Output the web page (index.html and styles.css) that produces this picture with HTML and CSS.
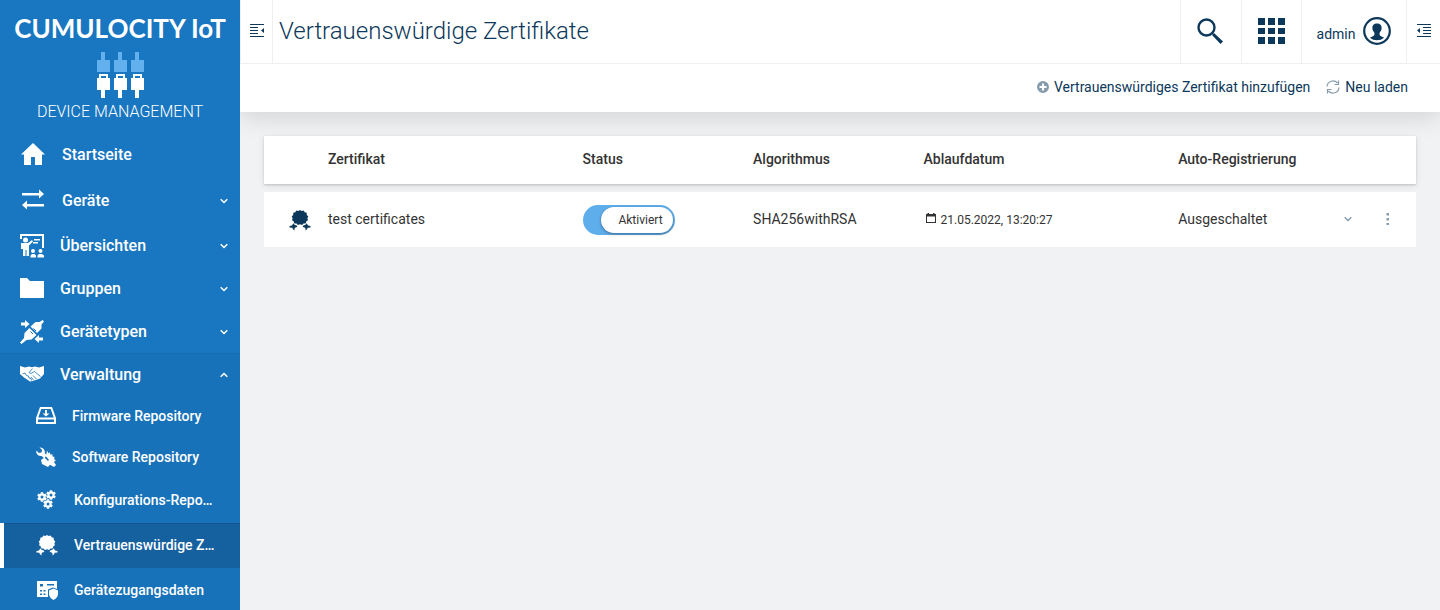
FILE: index.html
```html
<!DOCTYPE html>
<html lang="de">
<head>
<meta charset="utf-8">
<title>Vertrauenswürdige Zertifikate</title>
<link rel="stylesheet" href="styles.css">
</head>
<body>
<svg class="defs" aria-hidden="true">
  <symbol id="cert" viewBox="0 0 22 22">
    <path d="M11 1l1.700 1.100 2-.500 1 1.700 2 .500.100 2.100 1.500 1.500-.900 1.900.500 2-1.700 1.200-.600 1.900-2.100.100-1.400 1.500L11 15.300 8.900 16l-1.400-1.500-2.100-.100-.600-1.900-1.700-1.200.5-2-.9-1.900 1.500-1.500.1-2.100 2-.5 1-1.700 2 .5z"/>
    <path d="M4.300 14.200l1.200 1.500 2.200.800.700 1.500-1.700.200-1.200 1.300v2l-1.800-1.500-.200-1.200L.500 18.500V17l2.500-.500zM17.700 14.200l-1.200 1.500-2.200.800-.700 1.500 1.700.200 1.200 1.300v2l1.800-1.500.200-1.200 3-.300V17l-2.500-.500z"/>
  </symbol>
  <symbol id="down" viewBox="0 0 8 6"><path d="M.7 1.200L4 4.500l3.300-3.300" fill="none" stroke="currentColor" stroke-width="1.500"/></symbol>
  <symbol id="gear" viewBox="-5 -5 10 10">
    <circle r="2.600" fill="none" stroke="currentColor" stroke-width="2.200"/>
    <path d="M0-4.800v1.600M0 4.800V3.200M-4.200-2.400l1.400.8M4.200 2.400l-1.400-.8M-4.200 2.400l1.400-.8M4.200-2.400l-1.400.8" stroke="currentColor" stroke-width="2.400"/>
  </symbol>
</svg>
<div class="shell">
  <aside class="side">
    <div class="brand">
      <div class="brand-name">CUMULOCITY IoT</div>
      <svg class="brand-logo" viewBox="0 0 47 46">
        <path fill="#62b0ee" d="M4 0h4v8h5v12H0V8h4zM21 0h4v8h5v12H17V8h4zM38 0h4v8h5v12H34V8h4z"/>
        <path fill="#fff" fill-rule="evenodd" d="M2 22h9v4h2v12H8v8H4v-8H0V26h2zm2 2v2h5v-2zM19 22h9v4h2v12h-5v8h-4v-8h-4V26h2zm2 2v2h5v-2zM36 22h9v4h2v12h-5v8h-4v-8h-4V26h2zm2 2v2h5v-2z"/>
      </svg>
      <div class="brand-app">DEVICE MANAGEMENT</div>
    </div>
    <nav class="nav">
      <a class="item large" href="#">
        <svg viewBox="0 0 26 26"><path d="M13 1L1 12.500h3V23h7v-8h4v8h7V12.500h3z"/></svg><span class="label">Startseite</span>
      </a>
      <a class="item large" href="#">
        <svg viewBox="0 0 26 26"><path d="M2 5h17V1.500L24 6l-5 4.500V7.500H2zM24 16H7v-3.500L2 17l5 4.500v-3h17z"/></svg><span class="label">Geräte</span><svg class="chev"><use href="#down"/></svg>
      </a>
      <a class="item" href="#">
        <svg viewBox="0 0 24 24"><path d="M0 0h24v14h-2V2H2v3H0z"/><circle cx="5.500" cy="6" r="2.500"/><path d="M2 9h6l4-3 1 1.500L9 11.500V22H6.500v-6h-1v6H3v-7H1v-6zM14 5h6v1.500h-6zM13 8h5v1.500h-5z"/><circle cx="13" cy="17" r="2"/><circle cx="20.500" cy="17" r="2"/><path d="M10.500 23.500v-2L12 20h2.500l1.500 1.500v2zM17.500 23.500v-2L19 20h3l2 1.500v2z"/></svg><span class="label">Übersichten</span><svg class="chev"><use href="#down"/></svg>
      </a>
      <a class="item" href="#">
        <svg viewBox="0 0 24 24"><path d="M0 1h7l3 3h14v17H0z"/></svg><span class="label">Gruppen</span><svg class="chev"><use href="#down"/></svg>
      </a>
      <a class="item" href="#">
        <svg viewBox="0 0 24 24"><path d="M1 2.500h4V0l4.500 4L5 8V5.500H1zM23 17.500h-4V15l-4.500 4 4.500 4v-2.500h4z"/><path d="M22.500 0L24 1.500l-2.500 3v4L17 13 10.500 6.500 15.500 2h4zM9.500 8l7 7-5 4.500-5 .500L1.500 24 0 22.500 4 18l.500-5z"/><path d="M10.500 11.500l2.500 2.500M13.500 8.500l2.500 2.500" stroke="#1976c0"/></svg><span class="label">Gerätetypen</span><svg class="chev"><use href="#down"/></svg>
      </a>
      <div class="group">
        <a class="item" href="#">
          <svg viewBox="0 0 24 24"><path d="M0 3l5 1.500 4-1 3 .7 3-.7 4 1L24 3v8l-4 4.500L13 18l-3 .500-6-4L0 11z"/><path d="M12.500 5.500L9 9.500l2 1 3.500-2 6 5M2.500 11L5 10l1.500 2.500 2 .500.500 2 2 .500.500 2M13 12.500l3.500 3.500M11 14l3 3.500" fill="none" stroke="#1872b9" stroke-width=".8"/></svg><span class="label">Verwaltung</span><svg class="chev up"><use href="#down"/></svg>
        </a>
        <a class="item sub" href="#">
          <svg viewBox="0 0 20 20"><path fill-rule="evenodd" d="M4 1h12l4 11v6H0v-6zm1.300 2L2.300 11.500h15.400L14.700 3zM2 13.500V16h16v-2.500zM9 4h2v3.500h2.500L10 10.500 6.500 7.500H9z"/></svg><span class="label">Firmware Repository</span>
        </a>
        <a class="item sub" href="#">
          <svg viewBox="0 0 20 20"><path d="M3.500.5a4.700 4.700 0 0 1 5.300 5.800L11 8.500 8 11.300 5.700 9A4.700 4.700 0 0 1 .300 3.500L3 6l2.500-.6.600-2.400zM11 3.500l1.500 3 1.200-1.200 1 2.700 1.500-1 .600 3 1.600-.500-.200 3 1.700.500L18 15l2 3-2 2-4-2.200L12 20 6 17l-1-4 3.500-2.500L12 14l1-1-3-3.700z"/></svg><span class="label">Software Repository</span>
        </a>
        <a class="item sub wide" href="#">
          <svg viewBox="0 0 22 22"><use href="#gear" x="1" y="3" width="10" height="10"/><use href="#gear" x="10" y="1" width="10" height="10"/><use href="#gear" x="7" y="10" width="10" height="10"/></svg><span class="label" title="Konfigurations-Repository">Konfigurations-Repo…</span>
        </a>
        <a class="item sub wide active" href="#" aria-current="page">
          <svg viewBox="0 0 22 22"><use href="#cert" width="22" height="22"/></svg><span class="label" title="Vertrauenswürdige Zertifikate">Vertrauenswürdige Z…</span>
        </a>
        <a class="item sub wide" href="#">
          <svg viewBox="0 0 22 22"><path fill-rule="evenodd" d="M1 2h20v8l-4-1.500-5 2V18H1zm3 3v2.500h3V5zm7 0v1.500h7V5zm-7 6v1.500h2V11zm3.500 0v1.500h2V11zM4 14.500V16h2v-1.500zm3.500 0V16h2v-1.500z"/><path d="M17.500 9.500L22 11.500V15q0 3.500-4.500 6Q13 18.500 13 15v-3.500z"/></svg><span class="label">Gerätezugangsdaten</span>
        </a>
      </div>
    </nav>
  </aside>
  <main class="main">
    <div class="top">
      <header class="head">
        <button class="cell edge-left" aria-label="Navigation"><svg width="14" height="14" viewBox="0 0 14 14"><path d="M0 0h14v1H0zM0 3h8v1H0zM0 6h8v1H0zM0 9h8v1H0zM0 12h14v1H0zM14 4v5l-3-2.500z"/></svg></button>
        <h1 class="title">Vertrauenswürdige Zertifikate</h1>
        <button class="cell tool search" aria-label="Suchen"><svg width="28" height="28" viewBox="0 0 28 28"><circle cx="10.500" cy="10.500" r="8" fill="none" stroke="currentColor" stroke-width="2.400"/><path d="M16 18l2-2 9 8.500-2.500 2.500z"/></svg></button>
        <button class="cell tool" aria-label="Anwendungen"><svg width="27" height="26" viewBox="0 0 27 26"><path d="M0 0h7v7H0zM10 0h7v7h-7zM20 0h7v7h-7zM0 10h7v6H0zM10 10h7v6h-7zM20 10h7v6h-7zM0 19h7v7H0zM10 19h7v7h-7zM20 19h7v7h-7z"/></svg></button>
        <button class="cell user"><span class="user-name">admin</span><svg width="28" height="28" viewBox="0 0 28 28"><circle cx="14" cy="14" r="12.800" fill="none" stroke="currentColor" stroke-width="2.200"/><path d="M14 6.500c3 0 4.800 2 4.600 4.800-.1 2-1 3.400-2 4.500-.3 2 .2 2.900 1.500 3.400l3 1.500q-3 2.500-7.100 2.500t-7.100-2.500l3-1.500c1.300-.5 1.800-1.400 1.500-3.400-1-1.100-1.900-2.500-2-4.500C9.200 8.500 11 6.500 14 6.500z"/></svg></button>
        <button class="cell edge-right" aria-label="Seitenleiste"><svg width="14" height="14" viewBox="0 0 14 14"><path d="M0 0h14v1H0zM6 3h8v1H6zM6 6h8v1H6zM6 9h8v1H6zM0 12h14v1H0zM3 4v5L0 6.500z"/></svg></button>
      </header>
      <div class="actions">
        <button class="action"><svg width="12" height="12" viewBox="0 0 12 12"><path fill-rule="evenodd" d="M6 0a6 6 0 1 1 0 12A6 6 0 0 1 6 0zM5 2.500V5H2.500v2H5v2.500h2V7h2.500V5H7V2.500z"/></svg>Vertrauenswürdiges Zertifikat hinzufügen</button>
        <button class="action"><svg width="14" height="14" viewBox="0 0 14 14"><path d="M1 6.500a6 6 0 0 1 10.500-3.500M13 7.500A6 6 0 0 1 2.500 11M12.500.500v4h-4M1.500 13.500v-4h4" fill="none" stroke="currentColor" stroke-width="1.200"/></svg>Neu laden</button>
      </div>
    </div>
    <div class="content">
      <table class="grid">
        <colgroup><col class="c-icon"><col class="c-long"><col class="c-short"><col class="c-short"><col class="c-long"><col><col class="c-menu"></colgroup>
        <thead>
          <tr><th></th><th scope="col">Zertifikat</th><th scope="col">Status</th><th scope="col">Algorithmus</th><th scope="col">Ablaufdatum</th><th scope="col">Auto-Registrierung</th><th></th></tr>
        </thead>
        <tbody>
          <tr>
            <td class="icon-cell"><svg width="22" height="22"><use href="#cert"/></svg></td>
            <td>test certificates</td>
            <td class="switch-cell"><label class="switch"><input type="checkbox" checked><span class="knob">Aktiviert</span></label></td>
            <td>SHA256withRSA</td>
            <td class="date-cell"><span class="date"><svg width="10" height="10" viewBox="0 0 10 10"><path fill-rule="evenodd" d="M0 1h1.500V0H3v1h4V0h1.500v1H10v9H0zm1 2.500V9h8V3.500z"/></svg>21.05.2022, 13:20:27</span></td>
            <td><div class="auto">Ausgeschaltet<button class="mini" aria-label="Details"><svg width="8" height="6"><use href="#down"/></svg></button></div></td>
            <td><button class="mini" aria-label="Menü"><svg width="4" height="12" viewBox="0 0 4 12"><path d="M.5 0H3v2.500H.5zM.5 5H3v2.500H.5zM.5 10H3v2H.5z"/></svg></button></td>
          </tr>
        </tbody>
      </table>
    </div>
  </main>
</div>
</body>
</html>
```

FILE: styles.css
```css
* { box-sizing: border-box; }
body {
  margin: 0;
  font: 14px/20px Roboto, sans-serif;
  color: #333;
  background: #f1f2f4;
}
svg { fill: currentColor; flex: none; display: block; overflow: visible; }
symbol { overflow: visible; }
button { border: 0; padding: 0; background: none; font: inherit; color: inherit; cursor: pointer; }
.defs { position: absolute; width: 0; height: 0; }
.shell { display: flex; height: 100vh; overflow: hidden; }

.side { position: relative; z-index: 1; flex: none; width: 240px; background: #1976c0; color: #fff; overflow: hidden; }
.brand { display: flex; flex-direction: column; align-items: center; height: 132px; padding-top: 16px; }
.brand-name { font: 700 26px/24px Lato, sans-serif; white-space: nowrap; }
.brand-logo { width: 47px; height: 46px; margin-top: 12px; }
.brand-app { font-size: 16px; font-weight: 300; line-height: 20px; margin-top: 4px; }

.item {
  display: flex;
  align-items: center;
  gap: 16px;
  height: 43px;
  padding: 0 12px 0 20px;
  color: #fff;
  font-size: 16px;
  font-weight: 500;
  text-decoration: none;
}
.item svg { width: 24px; height: 24px; }
.item.large { height: 46px; }
.item.large svg:first-child { width: 26px; height: 26px; }
.item .chev { width: 8px; height: 6px; }
.up { transform: rotate(180deg); }
.label { flex: 1; overflow: hidden; text-overflow: ellipsis; white-space: nowrap; }
.group { background: #1872b9; box-shadow: inset 0 1px #176bad; }
.item.sub { height: 41px; padding: 0 20px 2px 36px; font-size: 14px; }
.item.sub svg { width: 20px; height: 20px; }
.item.sub.wide { height: 45px; }
.item.sub.wide svg { width: 22px; height: 22px; }
.item.sub.active { background: #1561a0; box-shadow: inset 4px 0 #fff, inset 0 1px #11548c; }

.main { flex: 1; min-width: 0; }
.top { background: #fff; color: #0b385b; box-shadow: 0 4px 24px rgba(0, 0, 0, .14); }
.head { display: flex; height: 64px; border-bottom: 1px solid #eeeff0; }
.cell { display: flex; align-items: center; justify-content: center; border-left: 1px solid #eeeff0; padding-bottom: 2px; }
.edge-left { width: 33px; border-right: 1px solid #eeeff0; }
.edge-right { width: 34px; }
.title { flex: 1; margin: 0; padding-left: 6px; font-size: 24px; font-weight: 300; line-height: 62px; white-space: nowrap; }
.tool { width: 60px; }
.tool.search { width: 61px; padding-right: 2px; }
.user { width: 105px; gap: 8px; }
.user-name { padding-top: 6px; }
.actions { display: flex; align-items: center; justify-content: flex-end; gap: 16px; height: 48px; padding: 0 32px 2px; }
.action { display: flex; align-items: center; gap: 5px; }
.action svg { color: #869cad; }

.content { padding: 16px 24px; }
.grid { width: 100%; table-layout: fixed; border-collapse: separate; border-spacing: 0 8px; }
.c-icon { width: 56px; }
.c-long { width: 22.1%; }
.c-short { width: 14.8%; }
.c-menu { width: 42px; }
.grid tr { background: #fff; }
.grid thead tr { box-shadow: 0 1px 2px rgba(0, 0, 0, .16), 0 2px 8px rgba(0, 0, 0, .08); }
.grid th { height: 48px; padding: 0 8px 2px; font-weight: 500; text-align: left; }
.grid td { height: 55px; padding: 0 8px 2px; }
.grid .switch-cell, .grid .date-cell { padding-bottom: 0; }
.grid .icon-cell { padding: 0 0 0 25px; color: #0b385b; }
.switch { display: block; width: 92px; height: 30px; padding: 2px 2px 2px 18px; border-radius: 15px; background: #5faeec; cursor: pointer; }
.switch input { position: absolute; opacity: 0; margin: 0; }
.knob { display: block; height: 26px; padding-right: 10px; border-radius: 13px; background: #fff; box-shadow: 0 1px 3px rgba(0, 0, 0, .4); font-size: 12px; line-height: 26px; text-align: right; }
.date { display: flex; align-items: center; gap: 5px; padding-left: 2px; font-size: 12px; }
.date svg { margin-bottom: 4px; }
.auto { display: flex; align-items: center; justify-content: space-between; padding-right: 10px; }
.mini { display: block; padding: 4px; color: #869cad; }
```
